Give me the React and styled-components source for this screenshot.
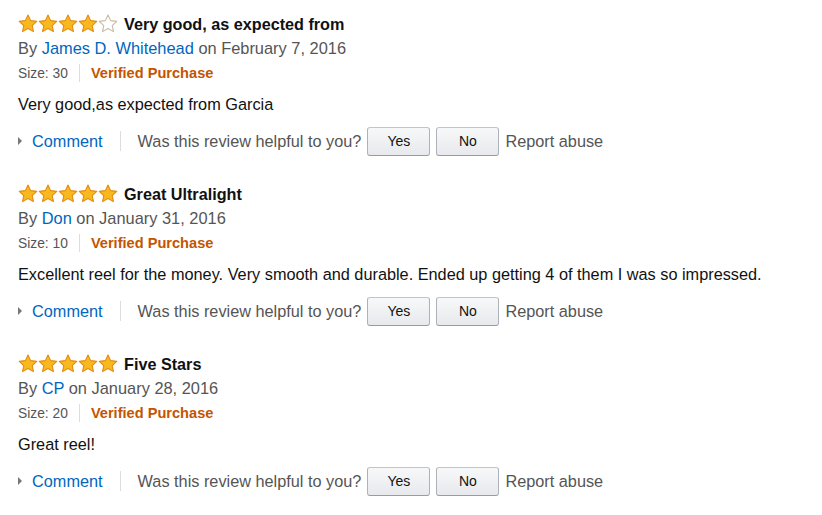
import styled, { createGlobalStyle } from "styled-components"

const Global = createGlobalStyle`
  body {
    margin: 0;
    background: #fff;
    font-family: "Liberation Sans", Arial, sans-serif;
  }
`

const reviews = [
    {
        rating: 4,
        title: "Very good, as expected from",
        author: "James D. Whitehead",
        date: "February 7, 2016",
        size: 30,
        text: "Very good,as expected from Garcia"
    },
    {
        rating: 5,
        title: "Great Ultralight",
        author: "Don",
        date: "January 31, 2016",
        size: 10,
        text: "Excellent reel for the money. Very smooth and durable. Ended up getting 4 of them I was so impressed."
    },
    {
        rating: 5,
        title: "Five Stars",
        author: "CP",
        date: "January 28, 2016",
        size: 20,
        text: "Great reel!"
    }
]

const List = styled.div`
  padding: 12px 0 0 18px;
`

const Review = styled.div`
  padding-bottom: 26px;
`

const TitleRow = styled.div`
  display: flex;
  align-items: center;
  height: 24px;
`

const Stars = styled.div`
  display: flex;
  width: 100px;
  margin: -2px 6px 0 0;
`

const Title = styled.span`
  font-size: 16.2px;
  font-weight: bold;
  color: #111;
`

const ByLine = styled.div`
  font-size: 16.4px;
  line-height: 24px;
  color: #555;
`

const Link = styled.a`
  color: #0066c0;
  text-decoration: none;
`

const Meta = styled.div`
  display: flex;
  align-items: center;
  margin-top: 3px;
  height: 20px;
  font-size: 13.8px;
  color: #555;
`

const Divider = styled.span`
  width: 1px;
  height: ${(p) => p.h || 18}px;
  background: #ddd;
  margin: 0 ${(p) => p.gap || 11}px;
`

const Verified = styled.span`
  color: #c45500;
  font-weight: bold;
  font-size: 14.6px;
`

const Body = styled.div`
  margin-top: 9px;
  font-size: 16.3px;
  line-height: 24px;
  color: #111;
`

const Actions = styled.div`
  display: flex;
  align-items: center;
  margin-top: 10px;
  height: 30px;
  font-size: 16.3px;
  color: #555;
`

const Caret = styled.span`
  width: 0;
  height: 0;
  border-top: 4px solid transparent;
  border-bottom: 4px solid transparent;
  border-left: 4px solid #777;
  margin-right: 10px;
`

const Button = styled.button`
  width: 63px;
  height: 29px;
  margin-left: 6px;
  border: 1px solid #adb1b8;
  border-top-color: #c1c4c9;
  border-bottom-color: #979ba3;
  border-radius: 3px;
  background: linear-gradient(to bottom, #f7f8fa, #e7e9ec);
  font-family: inherit;
  font-size: 14px;
  color: #111;
  padding: 0;
`

const Abuse = styled.span`
  margin-left: 6px;
`

const Star = ({ filled }) => (
    <svg width="20" height="19" viewBox="0 0 24 23">
        <path
            d="M12 1.2l3.2 6.8 7.4.9-5.5 5.1 1.5 7.3L12 17.6l-6.6 3.7 1.5-7.3L1.4 8.9l7.4-.9z"
            fill={filled ? "#f9b81f" : "#fff"}
            stroke={filled ? "#e38c0e" : "#c9b9a4"}
            strokeWidth="1.3"
            strokeLinejoin="round"
        />
    </svg>
)

export default function App() {
    return (
        <>
            <Global />
            <List>
                {reviews.map((r, i) => (
                    <Review key={i}>
                        <TitleRow>
                            <Stars>
                                {[0, 1, 2, 3, 4].map((k) => (
                                    <Star key={k} filled={k < r.rating} />
                                ))}
                            </Stars>
                            <Title>{r.title}</Title>
                        </TitleRow>
                        <ByLine>
                            By <Link href="#">{r.author}</Link> on {r.date}
                        </ByLine>
                        <Meta>
                            Size: {r.size}
                            <Divider />
                            <Verified>Verified Purchase</Verified>
                        </Meta>
                        <Body>{r.text}</Body>
                        <Actions>
                            <Caret />
                            <Link href="#">Comment</Link>
                            <Divider h={20} gap={17} />
                            Was this review helpful to you?
                            <Button>Yes</Button>
                            <Button>No</Button>
                            <Abuse>Report abuse</Abuse>
                        </Actions>
                    </Review>
                ))}
            </List>
        </>
    )
}
